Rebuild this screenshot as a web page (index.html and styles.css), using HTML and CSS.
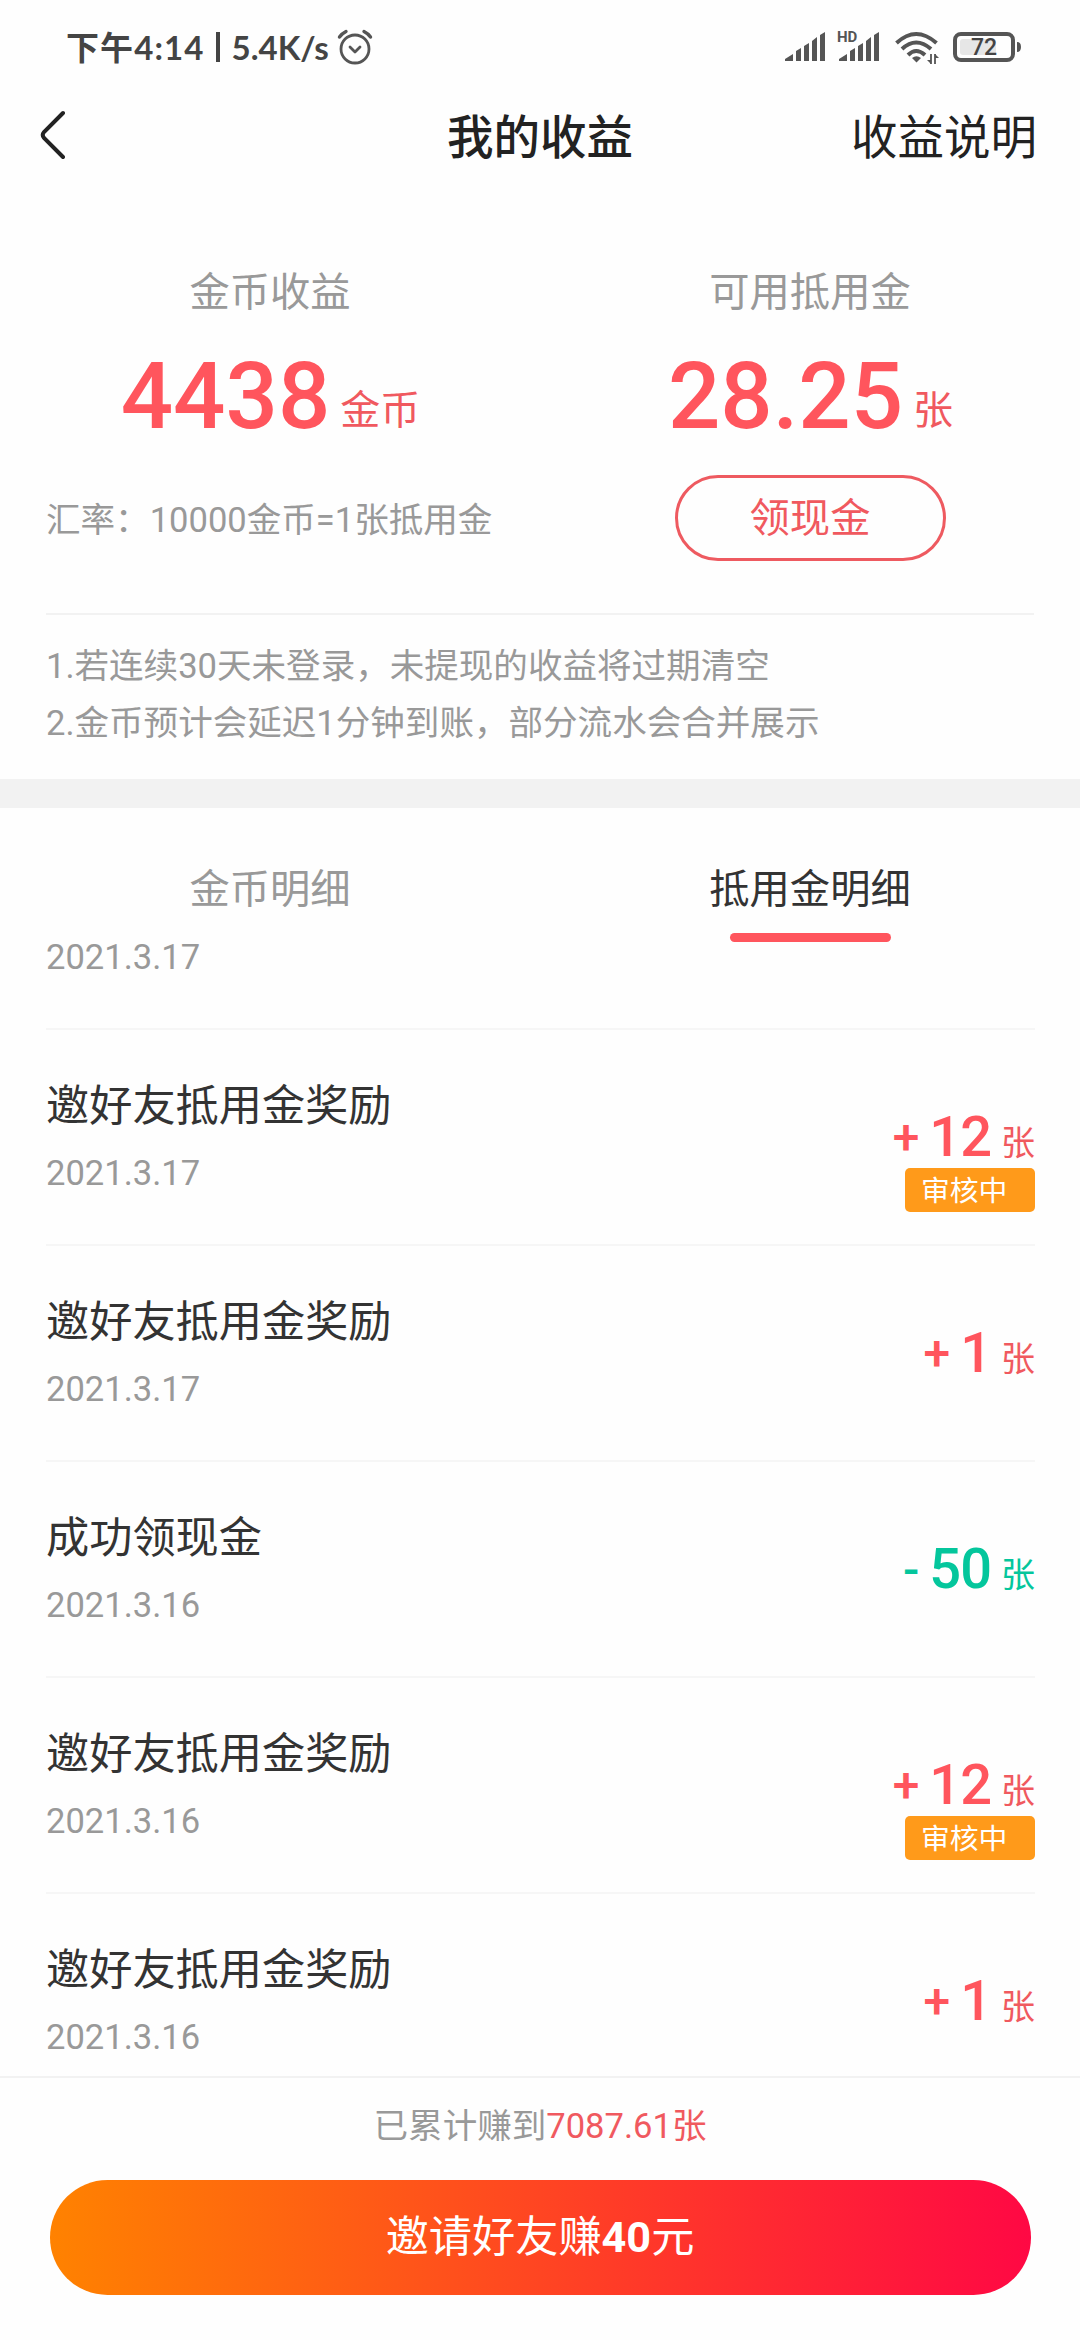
FILE: index.html
```html
<!DOCTYPE html>
<html lang="zh-CN">
<head>
<meta charset="utf-8">
<title>我的收益</title>
<link rel="stylesheet" href="styles.css">
</head>
<body>
<div class="statusbar">
  <div class="status-left">
    <span class="clock">下午4:14</span><span class="sep"></span><span class="speed">5.4K/s</span>
    <svg class="alarm" width="36" height="36" viewBox="0 0 36 36" fill="none" stroke="#555" stroke-width="2.8" stroke-linecap="round" stroke-linejoin="round"><circle cx="18" cy="20" r="14"/><path d="M13 18l5 5 5-5"/><path d="M2.500 8Q5 4.500 9 2.500M33.500 8Q31 4.500 27 2.500" stroke-width="3.4"/></svg>
  </div>
  <div class="status-right">
    <svg class="signal" width="42" height="32" viewBox="0 0 42 32" fill="#555"><path d="M0 31v-2l8-5v7zM11 31V21l5-3v13zM19 31V16l5-3v18zM27 31V11l5-4v24zM35 31V5l5-3v29z"/></svg>
    <svg class="signal-hd" width="44" height="32" viewBox="0 0 44 32" fill="#555"><path d="M2 31v-2l8-5v7zM13 31V21l5-3v13zM21 31V16l5-3v18zM29 31V11l5-4v24zM37 31V5l5-3v29z"/><text x="0" y="12" class="hd">HD</text></svg>
    <svg class="wifi" width="44" height="34" viewBox="0 0 44 34" fill="none" stroke="#555" stroke-width="4"><path d="M1.500 12Q21 -6 41.500 12M7 18Q21 5 36 18M13 24Q21 16 30 24"/><path d="M17 27q4.500-3.500 9 0l-4.500 4.500z" fill="#555" stroke="none"/><path d="M36 23v10M40 23v10" stroke-width="1.800"/><path d="M32 29h4v4zM40 23v4h4z" fill="#555" stroke="none"/></svg>
    <svg class="battery" width="70" height="32" viewBox="0 0 70 32"><rect x="2" y="3" width="58" height="26" rx="6" fill="none" stroke="#555" stroke-width="4"/><rect x="7" y="8" width="36" height="16" rx="3" fill="#e6e6e6"/><path d="M64 11q4 0 4 5t-4 5z" fill="#555"/><text x="31" y="24" class="pct">72</text></svg>
  </div>
</div>
<header class="nav">
  <svg class="back" width="28" height="52" viewBox="0 0 28 52" fill="none" stroke="#222" stroke-width="4" stroke-linecap="round"><path d="M24 4L5 23Q2.500 26 5 29L24 48"/></svg>
  <h1 class="nav-title">我的收益</h1>
  <span class="nav-link">收益说明</span>
</header>
<section class="summary">
  <div class="summary-cols">
    <div class="col">
      <div class="label">金币收益</div>
      <div class="amount"><b>4438</b><span>金币</span></div>
      <div class="rate">汇率：10000金币=1张抵用金</div>
    </div>
    <div class="col">
      <div class="label">可用抵用金</div>
      <div class="amount"><b>28.25</b><span>张</span></div>
      <div class="cash">领现金</div>
    </div>
  </div>
  <div class="notes">
    <p>1.若连续30天未登录，未提现的收益将过期清空</p>
    <p>2.金币预计会延迟1分钟到账，部分流水会合并展示</p>
  </div>
</section>
<nav class="tabs">
  <div class="tab">金币明细</div>
  <div class="tab active">抵用金明细</div>
</nav>
<main class="list">
  <div class="item partial"><div class="info"><div class="date">2021.3.17</div></div></div>
  <div class="item">
    <div class="info"><div class="name">邀好友抵用金奖励</div><div class="date">2021.3.17</div></div>
    <div class="value"><div class="sum"><i>+</i><b>12</b><span>张</span></div><div class="badge">审核中</div></div>
  </div>
  <div class="item">
    <div class="info"><div class="name">邀好友抵用金奖励</div><div class="date">2021.3.17</div></div>
    <div class="value"><div class="sum"><i>+</i><b>1</b><span>张</span></div></div>
  </div>
  <div class="item">
    <div class="info"><div class="name">成功领现金</div><div class="date">2021.3.16</div></div>
    <div class="value minus"><div class="sum"><i>-</i><b>50</b><span>张</span></div></div>
  </div>
  <div class="item">
    <div class="info"><div class="name">邀好友抵用金奖励</div><div class="date">2021.3.16</div></div>
    <div class="value"><div class="sum"><i>+</i><b>12</b><span>张</span></div><div class="badge">审核中</div></div>
  </div>
  <div class="item">
    <div class="info"><div class="name">邀好友抵用金奖励</div><div class="date">2021.3.16</div></div>
    <div class="value"><div class="sum"><i>+</i><b>1</b><span>张</span></div></div>
  </div>
</main>
<footer class="footer">
  <div class="total">已累计赚到<span>7087.61张</span></div>
  <div class="invite">邀请好友赚<b>40</b>元</div>
</footer>
</body>
</html>
```
FILE: styles.css
```css
* { box-sizing: border-box; margin: 0; padding: 0; }
body {
  width: 1080px;
  height: 2340px;
  overflow: hidden;
  background: #fefefe;
  color: #333;
  font-family: Roboto, "Noto Sans CJK SC", sans-serif;
  display: flex;
  flex-direction: column;
}
svg { display: block; }

.statusbar {
  height: 96px;
  flex: none;
  display: flex;
  justify-content: space-between;
  padding: 0 57px 0 66px;
  color: #444;
}
.status-left { display: flex; height: 94px; align-items: center; font: 700 33px/94px Lato, "Noto Sans CJK SC", sans-serif; }
.clock { letter-spacing: 1.1px; }
.sep { width: 4px; height: 30px; background: #444; margin: 0 12px 0 11px; }
.alarm { margin-left: 8px; }
.status-right { display: flex; align-items: flex-start; padding-top: 30px; }
.signal-hd { margin-left: 10px; overflow: visible; }
.wifi { margin: 1px 0 0 14px; }
.battery { margin: 1px 0 0 14px; }
.hd { font: 700 15px Roboto, sans-serif; }
.pct { font: 500 23px Roboto, sans-serif; fill: #444; text-anchor: middle; }

.nav {
  height: 132px;
  flex: none;
  display: grid;
  grid-template-columns: 1fr auto 1fr;
  padding: 2px 43px 0;
  color: #222;
}
.back { margin: 11px 0 0 -4px; }
.nav-title, .nav-link { font-size: 46.5px; line-height: 80px; font-weight: 500; }
.nav-link { font-weight: 400; text-align: right; }

.summary { flex: none; height: 580px; border-bottom: 29px solid #f2f2f2; padding: 0 46px; }
.summary-cols { display: grid; grid-template-columns: 1fr 1fr; height: 385px; margin: 0 -46px; }
.col { display: flex; flex-direction: column; align-items: center; padding-top: 35px; }
.label { font-size: 40.3px; line-height: 60px; color: #999; }
.amount { height: 108px; margin-top: 20px; padding-left: 1px; font-size: 92.2px; line-height: 108px; color: #ff555d; white-space: nowrap; }
.amount b { font-weight: 500; }
.amount span { margin-left: 10px; font-size: 40px; line-height: 1; vertical-align: 4px; color: #f0595f; }
.rate { align-self: flex-start; margin: 43px 0 0 46px; font-size: 34.56px; line-height: 52px; color: #999; }
.cash {
  width: 271px;
  height: 86px;
  margin-top: 24px;
  border: 3px solid #ee5a60;
  border-radius: 43px;
  color: #f0595f;
  font-size: 40.3px;
  line-height: 82px;
  text-align: center;
}
.notes { border-top: 2px solid #f2f2f2; padding-top: 23px; font-size: 34.56px; line-height: 57px; color: #999; }

.tabs { flex: none; height: 128px; display: grid; grid-template-columns: 1fr 1fr; }
.tab { display: flex; flex-direction: column; align-items: center; padding-top: 52px; font-size: 40.3px; line-height: 60px; color: #999; }
.tab.active { color: #333; }
.tab.active::after { content: ""; flex: none; width: 161px; height: 9px; margin-top: 13px; border-radius: 5px; background: #ff555d; }

.list { height: 1140px; flex: none; overflow: hidden; padding: 0 45px 0 46px; }
.item { display: flex; justify-content: space-between; height: 216px; border-bottom: 2px solid #f6f6f6; }
.item.partial { height: 94px; }
.item.partial .info { padding-top: 0; }
.info { padding-top: 45px; }
.name { font-size: 43.2px; line-height: 64px; }
.date { font-size: 34.56px; line-height: 40px; margin-top: 14px; color: #999; }
.item.partial .date { margin-top: 1px; }
.value { display: flex; flex-direction: column; align-items: flex-end; padding-top: 77px; color: #ff555d; }
.sum { height: 61px; font-size: 56px; line-height: 61px; white-space: nowrap; }
.sum i { font-style: normal; font-weight: 500; font-size: 48px; line-height: 1; vertical-align: 2px; }
.sum b { font-weight: 500; margin-left: 10px; letter-spacing: -1px; }
.sum span { font-size: 34px; line-height: 1; vertical-align: 1px; margin-left: 10px; color: #f0595f; }
.badge { width: 130px; height: 44px; border-radius: 5px; background: #ff9a1a; color: #fff; font-size: 28.8px; line-height: 46px; padding-left: 16px; }
.value.minus, .value.minus span { color: #04c69c; }

.footer { flex: none; height: 264px; border-top: 2px solid #f2f2f2; display: flex; flex-direction: column; align-items: center; padding-top: 22px; }
.total { font-size: 34.56px; line-height: 52px; color: #999; }
.total span { color: #f0595f; }
.invite {
  width: 981px;
  height: 115px;
  margin-top: 28px;
  border-radius: 58px;
  background: linear-gradient(90deg, #ff8200, #ff0844);
  color: #fff;
  font-size: 43.2px;
  line-height: 115px;
  text-align: center;
}
.invite b { font-weight: 700; }
```
